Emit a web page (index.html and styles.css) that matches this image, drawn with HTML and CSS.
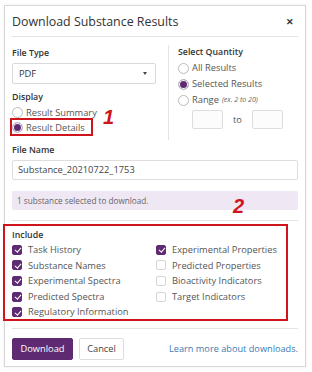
FILE: index.html
```html
<!DOCTYPE html>
<html lang="en">
<head>
  <meta charset="UTF-8" />
  <title>Download Substance Results</title>
  <link rel="stylesheet" href="styles.css">
</head>
<body>
  <div class="dialog">
    <div class="header">
      <div class="title">Download Substance Results</div>
      <div class="close">&#x2715;</div>
    </div>
    <div class="body">
      <div class="columns">
        <div class="col-left">
          <div class="label">File Type</div>
          <div class="select">PDF <span class="caret"></span></div>
          <div class="label display-label">Display</div>
          <div class="radio-row"><span class="radio"></span>Result Summary</div>
          <div class="radio-row"><span class="radio on"></span>Result Details</div>
        </div>
        <div class="col-right">
          <div class="label">Select Quantity</div>
          <div class="radio-row q"><span class="radio"></span>All Results</div>
          <div class="radio-row q"><span class="radio on"></span>Selected Results</div>
          <div class="radio-row q"><span class="radio"></span>Range <em class="hint">(ex. 2 to 20)</em></div>
          <div class="range">
            <span class="range-box"></span>
            <span class="to">to</span>
            <span class="range-box"></span>
          </div>
        </div>
      </div>
      <div class="label">File Name</div>
      <div class="text-input">Substance_20210722_1753</div>
      <div class="alert">1 substance selected to download.</div>
      <div class="include">
        <div class="label">Include</div>
        <div class="checks">
          <div class="check-row"><span class="box on"></span>Task History</div>
          <div class="check-row"><span class="box on"></span>Experimental Properties</div>
          <div class="check-row"><span class="box on"></span>Substance Names</div>
          <div class="check-row"><span class="box"></span>Predicted Properties</div>
          <div class="check-row"><span class="box on"></span>Experimental Spectra</div>
          <div class="check-row"><span class="box"></span>Bioactivity Indicators</div>
          <div class="check-row"><span class="box on"></span>Predicted Spectra</div>
          <div class="check-row"><span class="box"></span>Target Indicators</div>
          <div class="check-row"><span class="box on"></span>Regulatory Information</div>
        </div>
      </div>
    </div>
    <div class="footer">
      <button class="btn primary">Download</button>
      <button class="btn">Cancel</button>
      <a class="learn" href="#">Learn more about downloads.</a>
    </div>
  </div>

  <div class="mark mark-details"></div>
  <div class="num num-1">1</div>
  <div class="mark mark-include"></div>
  <div class="num num-2">2</div>
</body>
</html>
```

FILE: styles.css
```css
:root {
  --purple: #5e2a72;
  --text: #333;
  --muted: #666;
  --line: #e4e4e4;
  --red: #d0141c;
}
* {
  box-sizing: border-box;
  margin: 0;
  padding: 0;
}
body {
  background: #fff;
  font-family: 'Open Sans', 'Noto Sans', sans-serif;
  color: var(--text);
  position: relative;
  width: 312px;
  height: 372px;
  overflow: hidden;
}
.dialog {
  position: absolute;
  left: 4px;
  top: 5px;
  width: 302px;
  height: 362px;
  border: 1px solid #d8d8d8;
  box-shadow: 0 0 3px rgba(0, 0, 0, 0.08);
  background: #fff;
}
.header {
  margin: 0 7px;
  height: 31px;
  border-bottom: 1px solid var(--line);
  display: flex;
  align-items: center;
  justify-content: space-between;
}
.title {
  font-size: 12.4px;
  color: #333;
}
.close {
  font-size: 9px;
  font-weight: bold;
  color: #333;
  margin-right: 4px;
}
.body {
  padding: 8px 7px 0;
}
.columns {
  display: flex;
}
.col-left {
  width: 144px;
  margin-right: 12px;
  padding-top: 1px;
}
.col-right {
  border-left: 1px solid var(--line);
  padding-left: 9px;
  padding-bottom: 11px;
  flex: 1;
}
.label {
  font-size: 8.8px;
  font-weight: 600;
  line-height: 15px;
  color: #333;
}
.select {
  margin-top: 2px;
  height: 21px;
  border: 1px solid #d9d9d9;
  border-radius: 2px;
  font-size: 9.3px;
  line-height: 19px;
  padding: 0 6px;
  display: flex;
  justify-content: space-between;
  align-items: center;
  color: #333;
}
.caret {
  width: 0;
  height: 0;
  border-left: 2.5px solid transparent;
  border-right: 2.5px solid transparent;
  border-top: 3px solid #444;
  margin-right: 2px;
}
.display-label {
  margin-top: 6px;
}
.radio-row {
  display: flex;
  align-items: center;
  font-size: 9.3px;
  line-height: 15px;
  color: #555;
}
.radio-row.q {
  line-height: 16px;
}
.radio {
  width: 11px;
  height: 11px;
  border: 1px solid #bbb;
  border-radius: 50%;
  margin-right: 3px;
  background: #fff;
}
.radio.on {
  background: var(--purple);
  box-shadow: inset 0 0 0 1px #fff;
  border-color: #c9c3cf;
}
.hint {
  font-size: 7px;
  color: #666;
  margin-left: 3px;
}
.range {
  display: flex;
  align-items: center;
  margin-top: 2px;
  padding-left: 14px;
}
.range-box {
  width: 31px;
  height: 19px;
  border: 1px solid #ddd;
  border-radius: 2px;
  background: #fcfcfc;
}
.to {
  font-size: 9.3px;
  color: #555;
  width: 29px;
  text-align: center;
}
.body > .label {
  margin-top: 3px;
}
.text-input {
  margin-top: 2px;
  height: 20px;
  border: 1px solid #dedede;
  border-radius: 2px;
  font-size: 9.3px;
  line-height: 18px;
  padding: 0 5px;
  color: #444;
}
.alert {
  margin-top: 11px;
  height: 19px;
  background: #efe8f4;
  border-radius: 2px;
  font-size: 8.2px;
  line-height: 19px;
  padding: 0 5px;
  color: #666;
}
.include {
  margin-top: 10px;
  border-top: 1px solid var(--line);
  padding-top: 7px;
  padding-bottom: 8px;
  border-bottom: 1px solid var(--line);
}
.include .label {
  line-height: 14px;
}
.checks {
  display: grid;
  grid-template-columns: 144px 1fr;
}
.check-row {
  display: flex;
  align-items: center;
  font-size: 9.3px;
  line-height: 15.6px;
  color: #555;
}
.box {
  width: 10px;
  height: 10px;
  border: 1px solid #d5d5d5;
  border-radius: 2px;
  margin-right: 6px;
  background: #fff;
  position: relative;
}
.box.on {
  background: var(--purple);
  border-color: var(--purple);
}
.box.on::after {
  content: "";
  position: absolute;
  left: 2.5px;
  top: 0.5px;
  width: 2.5px;
  height: 5px;
  border-right: 1.5px solid #fff;
  border-bottom: 1.5px solid #fff;
  transform: rotate(40deg);
}
.footer {
  margin: 0 7px;
  padding-top: 9px;
  display: flex;
  align-items: center;
}
.btn {
  font-family: 'Open Sans', 'Noto Sans', sans-serif;
  height: 22px;
  font-size: 9.3px;
  border: 1px solid #ddd;
  border-radius: 2px;
  background: #fff;
  color: #444;
  width: 45px;
  margin-right: 6px;
}
.btn.primary {
  background: var(--purple);
  border-color: var(--purple);
  color: #fff;
  width: 61px;
}
.learn {
  margin-left: auto;
  font-size: 9.2px;
  color: #3c7bb5;
  text-decoration: none;
}
.mark {
  position: absolute;
  border: 2px solid var(--red);
}
.mark-details {
  left: 10px;
  top: 118px;
  width: 83px;
  height: 18px;
}
.mark-include {
  left: 3px;
  top: 224px;
  width: 285px;
  height: 97px;
}
.num {
  position: absolute;
  color: var(--red);
  font-family: 'Liberation Sans', Arial, sans-serif;
  font-weight: bold;
  font-style: italic;
  font-size: 20px;
  line-height: 20px;
}
.num-1 {
  left: 103px;
  top: 107px;
}
.num-2 {
  left: 233px;
  top: 196px;
}
```
